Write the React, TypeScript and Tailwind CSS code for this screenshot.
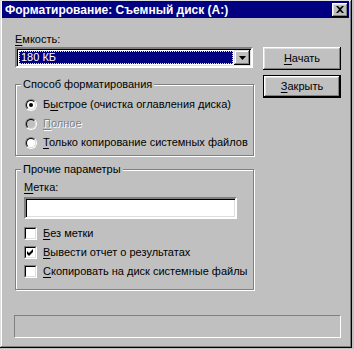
import React from 'react'

// Win95 "Format" dialog

function U({ children }: { children: React.ReactNode }) {
   return <span className="underline underline-offset-[2px] decoration-1">{children}</span>
}

function Radio({ checked, disabled, children }: { checked?: boolean; disabled?: boolean; children: React.ReactNode }) {
   return (
      <div className="flex items-center h-[19px]">
         <div className="w-[12px] h-[12px] rounded-full border border-t-[#808080] border-l-[#808080] border-r-white border-b-white">
            <div
               className={`w-full h-full rounded-full border border-t-black border-l-black border-r-[#dfdfdf] border-b-[#dfdfdf] flex items-center justify-center ${
                  disabled ? 'bg-[#c0c0c0]' : 'bg-white'
               }`}
            >
               {checked && <div className="w-[4px] h-[4px] rounded-full bg-black" />}
            </div>
         </div>
         <span className={`ml-[6px] ${disabled ? 'text-[#808080] [text-shadow:1px_1px_0_#fff]' : ''}`}>{children}</span>
      </div>
   )
}

function Check({ checked, children }: { checked?: boolean; children: React.ReactNode }) {
   return (
      <div className="flex items-center h-[19px]">
         <div className="w-[13px] h-[13px] border border-t-[#808080] border-l-[#808080] border-r-white border-b-white">
            <div className="w-full h-full border border-t-black border-l-black border-r-[#dfdfdf] border-b-[#dfdfdf] bg-white flex items-center justify-center">
               {checked && (
                  <svg width="7" height="7" viewBox="0 0 7 7">
                     <path d="M0 2 L2 4 L6 0 L6 3 L2 7 L0 5 Z" fill="#000" />
                  </svg>
               )}
            </div>
         </div>
         <span className="ml-[6px]">{children}</span>
      </div>
   )
}

function Group({ title, className, children }: { title: string; className: string; children: React.ReactNode }) {
   return (
      <div className={`relative border border-[#808080] shadow-[1px_1px_0_#fff,inset_1px_1px_0_#fff] ${className}`}>
         <span className="absolute top-[-7px] left-[5px] px-[2px] bg-[#c0c0c0] leading-[13px]">{title}</span>
         {children}
      </div>
   )
}

function Button({ def, children }: { def?: boolean; children: React.ReactNode }) {
   return (
      <div className={`w-[78px] h-[23px] ${def ? 'border border-black' : ''}`}>
         <div className="w-full h-full bg-[#c0c0c0] shadow-[inset_-1px_-1px_0_#000,inset_1px_1px_0_#fff,inset_-2px_-2px_0_#808080,inset_2px_2px_0_#dfdfdf] flex items-center justify-center">
            {children}
         </div>
      </div>
   )
}

export default function App() {
   return (
      <div className="w-[354px] h-[349px] bg-[#c0c0c0] font-['Liberation_Sans',Arial,sans-serif] text-[11px] leading-[13px] text-black">
         <div className="w-[352px] h-[348px] bg-[#c0c0c0] shadow-[inset_-1px_-1px_0_#000,inset_1px_1px_0_#dfdfdf,inset_-2px_-2px_0_#808080,inset_2px_2px_0_#fff] pt-[1px] pl-[2px] pr-[3px] flex flex-col">
            {/* title bar */}
            <div className="h-[17px] bg-[#000080] flex items-center justify-between pl-[3px] pr-[1px]">
               <span className="text-white font-bold text-[12px] leading-[16px]">Форматирование: Съемный диск (A:)</span>
               <div className="w-[16px] h-[14px] bg-[#c0c0c0] shadow-[inset_-1px_-1px_0_#000,inset_1px_1px_0_#fff,inset_-2px_-2px_0_#808080,inset_2px_2px_0_#dfdfdf] flex items-center justify-center">
                  <svg width="8" height="7" viewBox="0 0 8 7">
                     <path d="M0 0H2L4 2L6 0H8L5 3.5L8 7H6L4 5L2 7H0L3 3.5Z" fill="#000" />
                  </svg>
               </div>
            </div>

            <div className="flex pl-[13px] pt-[15px]">
               {/* left column */}
               <div className="w-[239px] flex flex-col">
                  <div>
                     <U>Е</U>мкость:
                  </div>
                  <div className="mt-[1px] w-[238px] h-[21px] border-2 border-t-[#808080] border-l-[#808080] border-r-white border-b-white shadow-[inset_1px_1px_0_#000,inset_-1px_-1px_0_#dfdfdf] bg-white flex p-[1px]">
                     <div className="flex-1 p-[1px]">
                        <div className="h-full bg-[#000080] outline outline-1 outline-dotted outline-[#ffff00] -outline-offset-1 text-white flex items-center pl-[2px]">
                           180 КБ
                        </div>
                     </div>
                     <div className="w-[16px] h-full bg-[#c0c0c0] shadow-[inset_-1px_-1px_0_#000,inset_1px_1px_0_#dfdfdf,inset_-2px_-2px_0_#808080,inset_2px_2px_0_#fff] flex items-center justify-center">
                        <svg width="7" height="4" viewBox="0 0 7 4">
                           <path d="M0 0H7L3.5 4Z" fill="#000" />
                        </svg>
                     </div>
                  </div>

                  <Group title="Способ форматирования" className="mt-[16px] h-[72px] pl-[9px] pt-[10px]">
                     <Radio checked>
                        Б<U>ы</U>строе (очистка оглавления диска)
                     </Radio>
                     <Radio disabled>
                        <U>П</U>олное
                     </Radio>
                     <Radio>
                        <U>Т</U>олько копирование системных файлов
                     </Radio>
                  </Group>

                  <Group title="Прочие параметры" className="mt-[13px] h-[121px] pl-[8px] pt-[11px]">
                     <div>
                        <U>М</U>етка:
                     </div>
                     <div className="mt-[3px] w-[213px] h-[22px] border-2 border-t-[#808080] border-l-[#808080] border-r-white border-b-white shadow-[inset_1px_1px_0_#000,inset_-1px_-1px_0_#dfdfdf] bg-white" />
                     <div className="mt-[5px]">
                        <Check>
                           <U>Б</U>ез метки
                        </Check>
                        <Check checked>
                           <U>В</U>ывести отчет о результатах
                        </Check>
                        <Check>
                           <U>С</U>копировать на диск системные файлы
                        </Check>
                     </div>
                  </Group>
               </div>

               {/* right column */}
               <div className="ml-[9px] mt-[14px] flex flex-col gap-[5px]">
                  <Button>
                     <U>Н</U>ачать
                  </Button>
                  <Button def>
                     <U>З</U>акрыть
                  </Button>
               </div>
            </div>

            {/* status bar */}
            <div className="ml-[12px] mt-[25px] w-[327px] h-[23px] border border-t-[#808080] border-l-[#808080] border-r-white border-b-white" />
         </div>
      </div>
   )
}
